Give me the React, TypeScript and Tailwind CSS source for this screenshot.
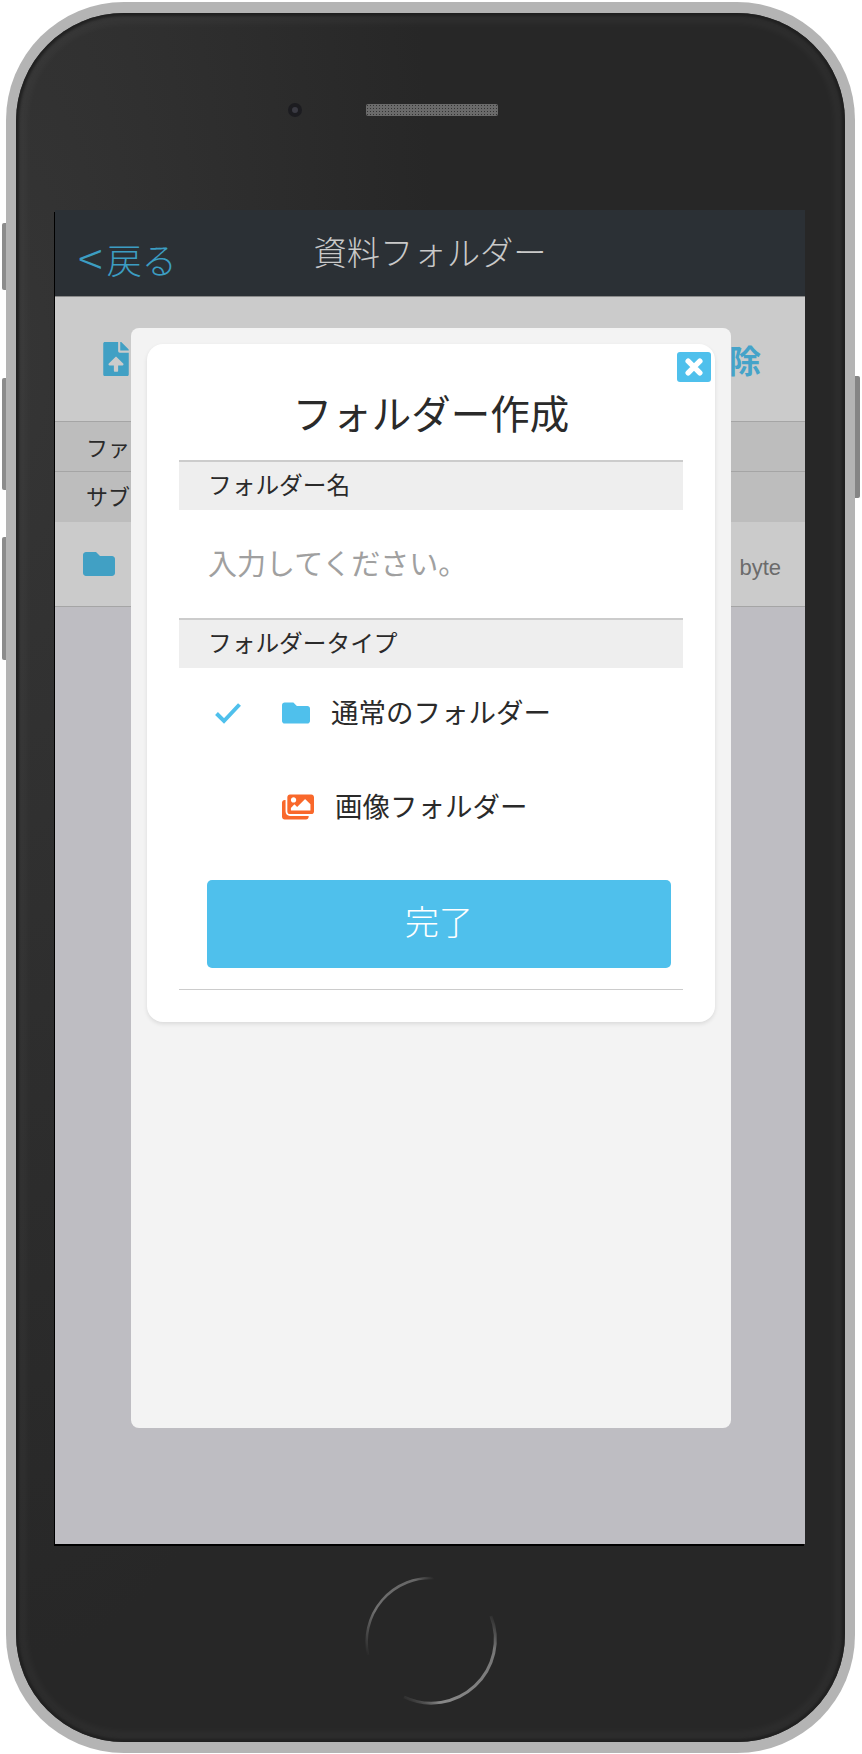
import React from 'react';
import { FaFileUpload, FaFolder, FaImages } from 'react-icons/fa';

function SectionLabel({ label }: { label: string }) {
  return (
    <div className="h-[50px] flex items-center pb-[3px] pl-[29px] bg-[#eeeeee] border-t-2 border-[#cccccc] text-[23.7px] leading-none text-[#2a2a2a]">
      {label}
    </div>
  );
}

function HomeButton() {
  return (
    <svg className="absolute left-[356px] top-[1567px]" width="150" height="150" viewBox="0 0 150 150" fill="none">
      <defs>
        <linearGradient id="arcTop" x1="0" y1="1" x2="1" y2="0">
          <stop offset="0" stopColor="#777" stopOpacity="0" />
          <stop offset="0.35" stopColor="#6f6f6f" />
          <stop offset="0.85" stopColor="#666" />
          <stop offset="1" stopColor="#666" stopOpacity="0" />
        </linearGradient>
        <linearGradient id="arcBottom" x1="1" y1="0" x2="0" y2="1">
          <stop offset="0" stopColor="#777" stopOpacity="0" />
          <stop offset="0.2" stopColor="#777" />
          <stop offset="0.8" stopColor="#888" />
          <stop offset="1" stopColor="#555" stopOpacity="0" />
        </linearGradient>
      </defs>
      <path d="M78 11 A64 64 0 0 0 12 88" stroke="url(#arcTop)" strokeWidth="2.5" />
      <path d="M135 49 A64 64 0 0 1 48 130" stroke="url(#arcBottom)" strokeWidth="3" />
    </svg>
  );
}

export default function App() {
  return (
    <div className="relative w-[862px] h-[1754px] bg-white overflow-hidden font-['Noto_Sans_CJK_JP','Liberation_Sans',sans-serif]">
      {/* side buttons */}
      <div className="absolute left-[2px] top-[223px] w-[6px] h-[67px] rounded-l-[2px] bg-[#8c8c8c]" />
      <div className="absolute left-[2px] top-[378px] w-[6px] h-[112px] rounded-l-[2px] bg-[#8c8c8c]" />
      <div className="absolute left-[2px] top-[537px] w-[6px] h-[123px] rounded-l-[2px] bg-[#8c8c8c]" />
      <div className="absolute left-[853px] top-[376px] w-[7px] h-[122px] rounded-r-[2px] bg-[#858585]" />

      <div className="absolute left-[6px] top-[2px] w-[849px] h-[1751px] rounded-[118px] bg-[#b4b4b4] pt-[11px] pb-[11px] px-[10px]">
        <div className="h-full rounded-[108px] overflow-hidden bg-[radial-gradient(ellipse_420px_1300px_at_0_20%,#353535,#272727)] shadow-[inset_0_0_3px_3px_#202020,inset_0_0_8px_10px_rgba(255,255,255,0.04)]">
          {/* camera + speaker */}
          <div className="h-[197px] pb-[3px] pl-[272px] flex items-center">
            <div className="w-[14px] h-[14px] rounded-full bg-[#1c1c20] flex items-center justify-center">
              <div className="w-[6px] h-[6px] rounded-full bg-[#3a3a42]" />
            </div>
            <div className="ml-[64px] w-[132px] h-[12px] rounded-[2px] bg-[#6a6a6a] bg-[radial-gradient(#333_1px,transparent_1px)] bg-[length:3px_3px]" />
          </div>

          {/* screen */}
          <div className="relative ml-[39px] w-[750px] h-[1334px] bg-[#bebdc2] shadow-[-1px_2px_0_#000]">
            <div className="h-[87px] bg-[#2b3035] grid grid-cols-[1fr_auto_1fr] border-b border-[#8a8a8a]">
              <div className="pl-[23px] pt-[25px] flex items-center h-[72px] font-light text-[#3c9dc2]">
                <span className="text-[46px] leading-none -mt-[6px]">&lt;</span>
                <span className="text-[35px] leading-none ml-[4px]">戻る</span>
              </div>
              <div className="pt-[19px] text-[33.3px] leading-[44px] font-light text-[#c9c9c9]">資料フォルダー</div>
              <div />
            </div>

            <div className="h-[125px] bg-[#cbcbcb] flex items-center justify-between pl-[44px] pr-[44px] border-b border-[#a5a5a5]">
              <FaFileUpload className="text-[#41a0c4] text-[34px]" />
              <span className="text-[32px] font-bold leading-none text-[#45a3c9]">除</span>
            </div>
            <div className="h-[50px] bg-[#bdbdbd] flex items-center pb-[2px] pl-[31px] border-b border-[#a5a5a5] text-[22px] leading-none text-[#2a2a2a]">ファ</div>
            <div className="h-[50px] bg-[#bdbdbd] flex items-center pb-[4px] pl-[31px] text-[22px] leading-none text-[#2a2a2a]">サブ</div>
            <div className="h-[85px] bg-[#cbcbcb] flex items-center justify-between pl-[28px] pr-[24px] border-b border-[#a5a5a5]">
              <FaFolder className="text-[#41a0c4] text-[32px]" />
              <span className="font-['Liberation_Sans',sans-serif] pt-[8px] text-[22px] leading-none text-[#6b6b6b]">byte</span>
            </div>

            {/* dialog */}
            <div className="absolute left-[76px] top-[118px] w-[600px] h-[1100px] rounded-[8px] bg-[#f3f3f3] p-[16px]">
              <div className="relative w-[568px] h-[678px] rounded-[16px] bg-white px-[32px] shadow-[0_2px_4px_rgba(0,0,0,0.1)]">
                <button type="button" className="absolute left-[530px] top-[8px] w-[34px] h-[30px] rounded-[3px] bg-[#4fc0ec] flex items-center justify-center">
                  <svg width="18" height="18" viewBox="0 0 20 20" fill="none">
                    <path d="M3.5 3.5 L16.5 16.5 M16.5 3.5 L3.5 16.5" stroke="#fff" strokeWidth="6" strokeLinecap="round" />
                  </svg>
                </button>
                <div className="h-[116px] pt-[20px] flex items-center justify-center text-[39.5px] leading-none text-[#2a2a2a]">フォルダー作成</div>
                <SectionLabel label="フォルダー名" />
                <div className="h-[108px] pb-[3px] pl-[29px] flex items-center text-[29px] leading-none text-[#a0a0a0]">入力してください。</div>
                <SectionLabel label="フォルダータイプ" />

                <div className="h-[90px] flex items-center pl-[36px]">
                  <svg width="26" height="21" viewBox="0 0 26 21" fill="none">
                    <path d="M1.5 10.5 L9 18 L24.5 1.5" stroke="#4fc0ec" strokeWidth="4" />
                  </svg>
                  <FaFolder className="ml-[41px] text-[#4fc0ec] text-[28px]" />
                  <span className="ml-[21px] -mt-[2px] text-[27.5px] leading-none text-[#2a2a2a]">通常のフォルダー</span>
                </div>
                <div className="h-[98px] flex items-center pl-[103px]">
                  <FaImages className="text-[#f9682b] text-[32px]" />
                  <span className="ml-[21px] -mt-[2px] text-[27.5px] leading-none text-[#2a2a2a]">画像フォルダー</span>
                </div>

                <button type="button" className="mt-[24px] ml-[28px] w-[464px] h-[88px] pb-[6px] rounded-[5px] bg-[#4fc0ec] text-white text-[34px] font-light leading-none">
                  完了
                </button>
                <div className="mt-[21px] border-t border-[#cccccc]" />
              </div>
            </div>
          </div>
        </div>
      </div>

      <HomeButton />
    </div>
  );
}
